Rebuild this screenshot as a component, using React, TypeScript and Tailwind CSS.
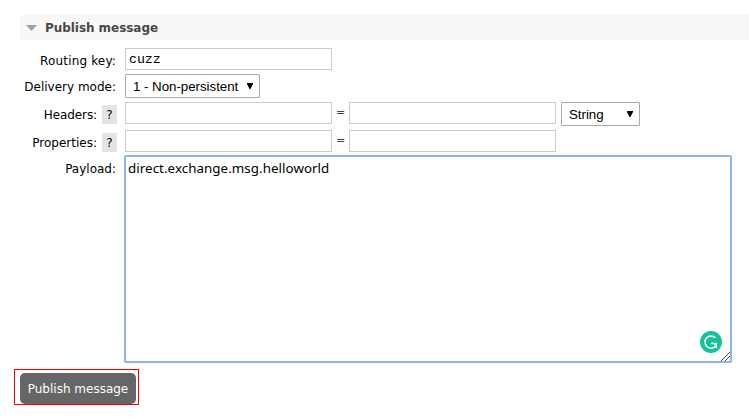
import React from "react";

function Label({ text, help = false, className }: { text: string; help?: boolean; className: string }) {
  return (
    <div className="flex h-[19px] w-[117px] shrink-0 items-center justify-end text-black">
      <span className={`whitespace-nowrap ${className}`}>{text}</span>
      {help && (
        <span className="ml-1 flex h-[19px] w-[15px] shrink-0 items-center justify-center bg-[#e4e4e4]">?</span>
      )}
    </div>
  );
}

function Input({ value = "" }: { value?: string }) {
  return (
    <input
      defaultValue={value}
      spellCheck={false}
      className="h-[22px] w-[207px] shrink-0 border border-[#cccccc] bg-white px-[3px] pt-px font-['Liberation_Mono',monospace] text-[13.33px] tracking-[-0.1px] text-black outline-none"
    />
  );
}

function Select({ text, className }: { text: string; className: string }) {
  return (
    <button
      className={`flex h-6 shrink-0 items-center justify-between rounded-[1px] border border-[#a9a9a9] bg-white pr-[6px] pl-[7px] font-['Liberation_Sans',sans-serif] text-[13.33px] text-black ${className}`}
    >
      <span className="mt-px whitespace-nowrap tracking-[-0.04px]">{text}</span>
      <svg width="6" height="6" viewBox="0 0 6 6" className="mb-[1px]">
        <path d="M0 0H6V1L4.2 4.5L3.5 6H2.5L1.8 4.5L0 1Z" fill="#000" />
      </svg>
    </button>
  );
}

function Equals() {
  return <span className="flex h-[22px] w-[17px] shrink-0 items-center justify-center text-[11px] text-[#444]">=</span>;
}

export default function App() {
  return (
    <main className="h-[419px] w-[749px] overflow-hidden bg-white pt-[15px] font-['DejaVu_Sans',Verdana,sans-serif] text-[12px] leading-4">
      <h2 className="ml-5 flex h-[25px] items-center bg-[#f8f8f8] pl-[6px] font-bold text-[#484848]">
        <svg width="11" height="6" viewBox="0 0 11 6" className="mr-2 mt-[1px]">
          <path d="M0 0H11L5.5 6Z" fill="#a0a0a0" />
        </svg>
        <span className="whitespace-nowrap tracking-[-0.05px]">Publish message</span>
      </h2>
      <form className="flex flex-col pt-2" onSubmit={(e) => e.preventDefault()}>
        <div className="flex h-[26px] gap-2">
          <div className="pt-[3px]"><Label text="Routing key:" className="mr-px tracking-[0.16px]" /></div>
          <Input value="cuzz" />
        </div>
        <div className="flex h-7 gap-2">
          <div className="pt-[3px]"><Label text="Delivery mode:" className="mr-px" /></div>
          <Select text="1 - Non-persistent" className="w-[135px]" />
        </div>
        <div className="flex h-7">
          <div className="mr-2 pt-[3px]"><Label text="Headers:" help className="mr-px tracking-[-0.1px]" /></div>
          <Input />
          <Equals />
          <Input />
          <Select text="String" className="ml-[5px] w-[79px]" />
        </div>
        <div className="flex h-[25px]">
          <div className="mr-2 pt-[3px]"><Label text="Properties:" help className="mr-px" /></div>
          <Input />
          <Equals />
          <Input />
        </div>
        <div className="flex h-[208px] gap-[7px]">
          <div className="pt-[4px]"><Label text="Payload:" className="mr-px" /></div>
          <div className="relative h-[208px] w-[608px]">
            <textarea
              spellCheck={false}
              defaultValue="direct.exchange.msg.helloworld"
              className="block h-full w-full resize-none rounded-[2px] border-2 border-[#8fb3f0] bg-white px-[2px] pt-[2px] font-['Noto_Sans',sans-serif] text-[13.33px] leading-[18px] tracking-[0.06px] text-black outline-none"
            />
            <svg width="22" height="22" viewBox="0 0 22 22" className="absolute right-[10px] bottom-[10px]">
              <circle cx="11" cy="11" r="11" fill="#15c39a" />
              <path d="M15.4 6.7A6.1 6.1 0 1 0 15.6 15.2" fill="none" stroke="#fff" strokeWidth="1.5" />
              <path d="M11.3 12.6H16.2V17" fill="none" stroke="#fff" strokeWidth="1.5" />
              <path d="M12.8 12H16.8V16Z" fill="#fff" />
            </svg>
            <svg width="9" height="9" viewBox="0 0 9 9" className="absolute right-[2px] bottom-[2px]">
              <path d="M0 9L9 0M4 9L9 4" stroke="#444" strokeWidth="1" />
            </svg>
          </div>
        </div>
      </form>
      <div className="mt-[6px] ml-[14px] flex h-9 w-[125px] border border-[#ff0000] pt-[3px] pl-[5px]">
        <button className="flex h-[31px] w-[116px] items-center justify-center rounded-[5px] bg-[#666] text-white">
          <span className="whitespace-nowrap">Publish message</span>
        </button>
      </div>
    </main>
  );
}
